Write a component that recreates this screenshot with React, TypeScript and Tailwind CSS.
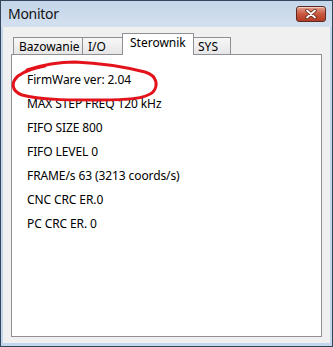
import React from "react";

const lines = [
  "FirmWare ver: 2.04",
  "MAX STEP FREQ 120 kHz",
  "FIFO SIZE 800",
  "FIFO LEVEL 0",
  "FRAME/s 63 (3213 coords/s)",
  "CNC CRC ER.0",
  "PC CRC ER. 0",
];

function CloseButton() {
  return (
    <div className="w-[30px] h-[16px] rounded-[3px] border border-[#5e2a20] bg-gradient-to-b from-[#e3a08e] via-[#c9573f] to-[#b33b25] flex items-center justify-center shadow-[inset_0_1px_0_rgba(255,255,255,0.5)]">
      <svg width="12" height="10" viewBox="0 0 12 10">
        <path d="M2 1.5 L10 8.5 M10 1.5 L2 8.5" stroke="#5a2418" strokeWidth="3.4" strokeLinecap="round" />
        <path d="M2 1.5 L10 8.5 M10 1.5 L2 8.5" stroke="#ffffff" strokeWidth="1.8" strokeLinecap="round" />
      </svg>
    </div>
  );
}

export default function App() {
  return (
    <div
      className="relative w-[333px] h-[347px] border border-[#34465c] bg-[#c2d6ec] flex flex-col px-[2px] pb-[3px] text-black"
      style={{ fontFamily: '"Noto Sans", "Open Sans", sans-serif' }}
    >
      {/* title bar */}
      <div className="h-[26px] flex items-center bg-gradient-to-b from-[#c4d6ea] to-[#d3e0ef] -mx-[2px] px-[2px]">
        <span className="ml-[5px] text-[14px] tracking-[-0.3px] leading-none text-[#111]">Monitor</span>
        <div className="ml-auto mr-[4px]">
          <CloseButton />
        </div>
      </div>

      {/* client area */}
      <div className="flex-1 bg-[#f0f0f0] flex flex-col">
        <div className="mt-[6px] ml-[10px] h-[21px] flex items-end text-[12px] leading-[16px]">
          <div className="w-[70px] h-[17px] border border-b-0 border-[#8e9095] bg-gradient-to-b from-[#f7f7f7] to-[#e6e6e6] pt-px pl-[5px]">
            Bazowanie
          </div>
          <div className="w-[41px] h-[17px] border-t border-r border-[#8e9095] bg-gradient-to-b from-[#f7f7f7] to-[#e6e6e6] pt-px pl-[5px]">
            I/O
          </div>
          <div className="relative z-10 -mx-[2px] -mb-px w-[72px] h-[22px] border border-b-0 border-[#8e9095] bg-white pt-px pl-[7px]">
            Sterownik
          </div>
          <div className="w-[39px] h-[17px] border-t border-r border-[#8e9095] bg-gradient-to-b from-[#f7f7f7] to-[#e6e6e6] pt-px pl-[6px]">
            SYS
          </div>
        </div>

        <div className="ml-[8px] mr-[8px] mb-[6px] flex-1 border border-[#8e9095] bg-white pt-[13px] pl-[15px] text-[12px] tracking-[-0.1px] leading-[24px]">
          {lines.map((l) => (
            <div key={l}>{l}</div>
          ))}
        </div>
      </div>

      {/* red marker annotation */}
      <svg
        className="absolute left-[-1px] top-[-1px] pointer-events-none"
        width="333"
        height="347"
        viewBox="0 0 333 347"
      >
        <path
          d="M27 70 C45 64 60 62 75 62 C100 63 125 67 145 72 C158 76 158 86 153 92 C146 99 125 100 100 100 C70 100 40 100 22 95 C11 91 11 82 18 76 C25 71 33 68 45 66"
          fill="none"
          stroke="#e4131b"
          strokeWidth="3"
          strokeLinecap="round"
        />
      </svg>
    </div>
  );
}
